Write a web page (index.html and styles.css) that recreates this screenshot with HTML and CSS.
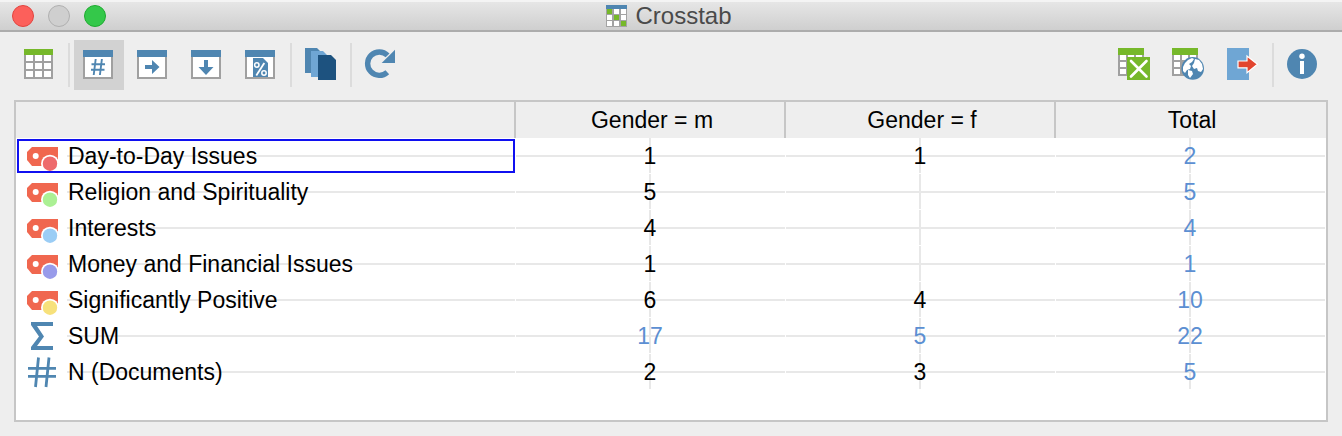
FILE: index.html
```
<!DOCTYPE html>
<html lang="en">
<head>
<meta charset="utf-8">
<title>Crosstab</title>
<link rel="stylesheet" href="styles.css">
</head>
<body class="window">
<svg class="sprite" aria-hidden="true">
  <symbol id="frame" viewBox="0 0 32 32">
    <path fill="#a0a0a0" d="M0 2h30v29H0z"/><path fill="#fff" d="M2 9h26v20H2z"/><path fill="#4f86b1" d="M0 2h30v7H0z"/>
  </symbol>
  <symbol id="tag" viewBox="0 0 32 36">
    <path fill="#f0674f" d="M5 9h26v19H5l-5-6v-8z"/><circle cx="8.7" cy="18" r="3" fill="#fff"/>
    <circle cx="23" cy="25.7" r="9" fill="#fff"/><circle cx="23" cy="25.7" r="7.2" fill="currentColor"/>
  </symbol>
</svg>
<header class="titlebar">
  <div class="lights">
    <button class="light light-close" aria-label="Close"></button>
    <button class="light light-min" aria-label="Minimize"></button>
    <button class="light light-zoom" aria-label="Zoom"></button>
  </div>
  <h1 class="title">
    <svg class="title-icon" viewBox="0 0 21 22" aria-hidden="true">
      <path fill="#a3a3a3" d="M0 0h21v22H0z"/><path fill="#4f86b1" d="M0 0h21v4H0z"/>
      <path fill="#fff" d="M8 4h5v5H8zM15 4h5v5h-5zM1 10h5v5H1zM15 10h5v5h-5zM1 16h5v5H1zM8 16h5v5H8z"/>
      <path fill="#76b82a" d="M1 4h5v5H1zM8 10h5v5H8zM15 16h5v5h-5z"/>
    </svg>
    Crosstab
  </h1>
</header>
<nav class="toolbar" aria-label="Toolbar">
  <button class="tool" aria-label="Table"><svg class="icon" viewBox="0 0 32 32">
    <path fill="#a0a0a0" d="M1 1h29v30H1z"/><path fill="#76b82a" d="M1 1h29v6H1z"/>
    <path fill="#fff" d="M3 7h7v6H3zM12 7h7v6h-7zM21 7h7v6h-7zM3 15h7v6H3zM12 15h7v6h-7zM21 15h7v6h-7zM3 23h7v6H3zM12 23h7v6h-7zM21 23h7v6h-7z"/></svg></button>
  <span class="divider"></span>
  <button class="tool tool-active" aria-label="Absolute numbers" aria-pressed="true"><svg class="icon" viewBox="0 0 32 32"><use href="#frame"/>
    <path fill="none" stroke="#4f86b1" stroke-width="1.9" d="M12.7 11l-2 16M18.9 11l-2 16M8.5 16.2H22M8 21.8h13.500"/></svg></button>
  <button class="tool" aria-label="Row percentages"><svg class="icon" viewBox="0 0 32 32"><use href="#frame"/>
    <path fill="#4f86b1" d="M8 17h7v-5l7.500 7-7.500 7v-5H8z"/></svg></button>
  <button class="tool" aria-label="Column percentages"><svg class="icon" viewBox="0 0 32 32"><use href="#frame"/>
    <path fill="#4f86b1" d="M13 12h4v7h5.500L15 27l-7.500-8H13z"/></svg></button>
  <button class="tool" aria-label="Percentages of documents"><svg class="icon" viewBox="0 0 32 32"><use href="#frame"/>
    <path fill="#4f86b1" d="M8 10h10l5 5v14H8z"/>
    <g fill="none" stroke="#fff"><circle cx="11.800" cy="17" r="2.200" stroke-width="1.500"/><circle cx="19" cy="25" r="2.200" stroke-width="1.500"/><path stroke-width="1.800" d="M19.300 15l-8 12.500"/></g></svg></button>
  <span class="divider"></span>
  <button class="tool" aria-label="Documents"><svg class="icon" viewBox="0 0 32 32">
    <path fill="#4f86b1" d="M0 0h12l4 4v21H0z"/><path fill="#6fa6d4" d="M6 3h12l4 4v22H6z"/><path fill="#1d527f" d="M13 7h13l5 5v20H13z"/></svg></button>
  <span class="divider"></span>
  <button class="tool" aria-label="Refresh"><svg class="icon" viewBox="0 0 32 32">
    <path fill="none" stroke="#4f86b1" stroke-width="5.400" d="M22.600 7.400A11.700 11.700 0 1 0 22.300 24.200"/><path fill="#4f86b1" d="M30 1.700V15H16.700z"/></svg></button>
  <div class="toolbar-end">
    <button class="tool" aria-label="Export to Excel"><svg class="icon" viewBox="1 0 32 32">
      <path fill="#a0a0a0" d="M0 0h26v28H0z"/><path fill="#76b82a" d="M0 0h26v7H0z"/>
      <path fill="#fff" d="M2 7h6v5H2zM10 7h6v5h-6zM18 7h6v5h-6zM2 14h6v5H2zM2 21h6v5H2z"/>
      <path fill="#76b82a" d="M9 9h23v23H9z"/><path fill="none" stroke="#fff" stroke-width="2.600" stroke-linecap="round" d="M13 13l15.500 15.500M28.500 13L13 28.500"/></svg></button>
    <button class="tool" aria-label="Export to HTML"><svg class="icon" viewBox="1 0 32 32">
      <path fill="#a0a0a0" d="M0 0h26v28H0z"/><path fill="#76b82a" d="M0 0h26v7H0z"/>
      <path fill="#fff" d="M2 7h6v5H2zM10 7h6v5h-6zM18 7h6v5h-6zM2 14h6v5H2zM2 21h6v5H2z"/>
      <circle cx="20.700" cy="20.400" r="11.300" fill="#4f86b1"/>
      <path fill="#fff" d="M11 19l2-4 3-3 4-2 2 1-2 3-3 2 2 2-1 3-3 1-2 3-2-2zM23 11l4 1 3 4 1 5-2 3-3-1-1-3-3 1-2-3 2-3zM16 22l4 1 1 3-3 4-2-3z"/></svg></button>
    <button class="tool" aria-label="Exit"><svg class="icon" viewBox="0 0 32 32">
      <path fill="#6fa6d4" d="M0 0h22v32H0z"/><path fill="#e2452f" stroke="#fff" stroke-width="1.200" d="M11 13h9V8l10.500 8.300L20 24.800v-5h-9z"/></svg></button>
    <span class="divider"></span>
    <button class="tool" aria-label="Info"><svg class="icon" viewBox="0 0 32 32">
      <circle cx="15" cy="16" r="15" fill="#4f86b1"/><circle cx="15" cy="8.200" r="2.700" fill="#fff"/><path fill="#fff" d="M13 13h4v13h-4z"/></svg></button>
  </div>
</nav>
<main class="panel">
  <table class="crosstab">
    <colgroup><col><col class="value-col"><col class="value-col"><col class="value-col"></colgroup>
    <thead><tr><td></td><th scope="col">Gender = m</th><th scope="col">Gender = f</th><th scope="col">Total</th></tr></thead>
    <tbody>
      <tr><th scope="row" class="selected"><div class="label"><svg class="row-icon red"><use href="#tag"/></svg>Day-to-Day Issues</div></th><td>1</td><td>1</td><td class="sum">2</td></tr>
      <tr><th scope="row"><div class="label"><svg class="row-icon green"><use href="#tag"/></svg>Religion and Spirituality</div></th><td>5</td><td></td><td class="sum">5</td></tr>
      <tr><th scope="row"><div class="label"><svg class="row-icon blue"><use href="#tag"/></svg>Interests</div></th><td>4</td><td></td><td class="sum">4</td></tr>
      <tr><th scope="row"><div class="label"><svg class="row-icon violet"><use href="#tag"/></svg>Money and Financial Issues</div></th><td>1</td><td></td><td class="sum">1</td></tr>
      <tr><th scope="row"><div class="label"><svg class="row-icon yellow"><use href="#tag"/></svg>Significantly Positive</div></th><td>6</td><td>4</td><td class="sum">10</td></tr>
      <tr><th scope="row"><div class="label"><svg class="row-icon" viewBox="0 0 32 36"><path fill="#4f86b1" d="M4 4h22v4H10l7 10.500L10 28h16v4H4v-3l8-10.500L4 7z"/></svg>SUM</div></th><td class="sum">17</td><td class="sum">5</td><td class="sum">22</td></tr>
      <tr><th scope="row"><div class="label"><svg class="row-icon" viewBox="0 0 32 36"><path fill="none" stroke="#4f86b1" stroke-width="2.800" d="M11.500 3.500l-3 29.500M22 3.500L19 33M1 14.400h28M1 22.400h28"/></svg>N (Documents)</div></th><td>2</td><td>3</td><td class="sum">5</td></tr>
    </tbody>
  </table>
</main>
</body>
</html>
```
FILE: styles.css
```
* { box-sizing: border-box; }

.window {
  margin: 0;
  min-height: 100vh;
  display: flex;
  flex-direction: column;
  background: #eeeeee;
  color: #000;
  font-family: "Liberation Sans", Arial, sans-serif;
  font-size: 23px;
}

.sprite { display: none; }

.titlebar {
  display: grid;
  grid-template-columns: 1fr auto 1fr;
  align-items: center;
  height: 32px;
  padding: 0 16px 0 12px;
  border-top: 2px solid #f4f4f4;
  border-bottom: 2px solid #acacac;
  background: linear-gradient(#e6e6e6, #cfcfcf);
}

.lights { display: flex; gap: 14px; }

.light {
  width: 22px;
  height: 22px;
  padding: 0;
  border: 1px solid;
  border-radius: 50%;
}
.light-close { background: #fc605b; border-color: #e2443f; }
.light-min { background: #cfcfcf; border-color: #b0b0b0; }
.light-zoom { background: #34c84a; border-color: #1eab30; }

.title {
  display: flex;
  align-items: center;
  gap: 8px;
  margin: 0;
  font-size: 24px;
  font-weight: 400;
  line-height: 28px;
  color: #4a4a4a;
}
.title-icon { width: 21px; height: 22px; }

.toolbar {
  display: flex;
  align-items: center;
  gap: 4px;
  padding: 8px 14px 10px;
}
.toolbar-end {
  display: flex;
  align-items: center;
  gap: 4px;
  margin-left: auto;
}
.tool {
  display: flex;
  width: 50px;
  height: 50px;
  padding: 8px 9px;
  border: 0;
  background: none;
}
.tool-active { background: #d2d2d2; }
.icon { flex: none; width: 32px; height: 32px; overflow: visible; }
.divider { width: 2px; height: 44px; background: #dcdcdc; }

.panel {
  flex: 1;
  margin: 0 14px 14px;
  border: 2px solid #c6c6c6;
  background: #fff;
}

.crosstab {
  width: 100%;
  table-layout: fixed;
  border-collapse: separate;
  border-spacing: 0;
  line-height: 36px;
}
.value-col { width: 270px; }

.crosstab th,
.crosstab td {
  height: 36px;
  padding: 0;
  font-weight: 400;
  text-align: center;
}
.crosstab thead th,
.crosstab thead td {
  padding-left: 4px;
  border-right: 2px solid #c6c6c6;
  background: #eeeeee;
}
.crosstab thead th:last-child { border-right-color: #eeeeee; }

.crosstab tbody td {
  padding-right: 2px;
  background:
    linear-gradient(#e8e8e8, #e8e8e8) 0 17px / calc(100% - 1px) 2px no-repeat,
    linear-gradient(#e8e8e8, #e8e8e8) calc(50% - 1px) 0 / 2px 35px no-repeat;
}
.crosstab tbody th {
  text-align: left;
  background: linear-gradient(#e8e8e8, #e8e8e8) right 1px top 17px / calc(100% - 52px) 2px no-repeat;
}
.crosstab .selected { outline: 2px solid #1010f0; outline-offset: -3px; }
.crosstab .sum { color: #5c8fd2; }

.label { display: flex; gap: 9px; padding-left: 11px; }
.row-icon { flex: none; width: 32px; height: 36px; }
.red { color: #ee6a6c; }
.green { color: #abf094; }
.blue { color: #9bcdf5; }
.violet { color: #989bea; }
.yellow { color: #f7e17b; }
```
